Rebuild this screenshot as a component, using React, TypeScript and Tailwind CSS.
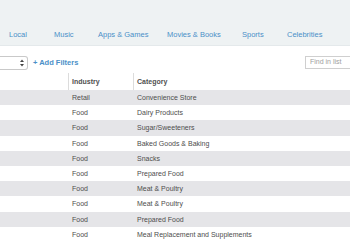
import React from "react";

const nav = [
  { label: "Local", w: "w-[45px]" },
  { label: "Music", w: "w-[44px]" },
  { label: "Apps & Games", w: "w-[69px]" },
  { label: "Movies & Books", w: "w-[75px]" },
  { label: "Sports", w: "w-[45px]" },
  { label: "Celebrities", w: "w-[55px]" },
];

const rows = [
  ["Retail", "Convenience Store"],
  ["Food", "Dairy Products"],
  ["Food", "Sugar/Sweeteners"],
  ["Food", "Baked Goods & Baking"],
  ["Food", "Snacks"],
  ["Food", "Prepared Food"],
  ["Food", "Meat & Poultry"],
  ["Food", "Meat & Poultry"],
  ["Food", "Prepared Food"],
  ["Food", "Meal Replacement and Supplements"],
];

export default function App() {
  return (
    <div className="w-[350px] h-[247px] bg-white overflow-hidden antialiased font-['Liberation_Sans',Arial,sans-serif]">
      <div className="h-[46px] bg-[#eef2f3] border-b border-[#e4e9eb] pt-[30px] pl-[9px] flex text-[7.5px] leading-[10px] text-[#4a90c8]">
        {nav.map((n) => (
          <span key={n.label} className={`${n.w} shrink-0 whitespace-nowrap`}>
            {n.label}
          </span>
        ))}
      </div>
      <div className="h-[27px] pt-[6px] flex items-center">
        <div className="flex items-center w-full h-[14px]">
          <div className="w-[28px] h-[14px] bg-white border border-l-0 border-[#c9c9c9] rounded-r-[3px] flex items-center justify-end pr-[3px]">
            <svg width="4" height="8" viewBox="0 0 4 8">
              <path d="M0 3 L2 0.5 L4 3 Z" fill="#444" />
              <path d="M0 5 L2 7.5 L4 5 Z" fill="#444" />
            </svg>
          </div>
          <span className="ml-[5px] text-[7.5px] font-bold text-[#4a90c8] leading-[10px]">
            + Add Filters
          </span>
          <div className="ml-auto w-[45px] h-[13px] border border-r-0 border-[#cfcfcf] bg-white flex items-center pl-[4px] text-[7px] text-[#a0a0a0] whitespace-nowrap">
            Find in list
          </div>
        </div>
      </div>
      <div className="text-[7px] leading-[9px]">
        <div className="h-[17px] flex items-stretch font-semibold text-[#505050]">
          <div className="w-[68px] shrink-0" />
          <div className="w-[65px] shrink-0 border-l border-[#dcdcdc] pl-[3px] flex items-center">
            Industry
          </div>
          <div className="flex-1 border-l border-[#dcdcdc] pl-[3px] flex items-center">
            Category
          </div>
        </div>
        {rows.map((r, i) => (
          <div
            key={i}
            className={`h-[15.2px] flex items-center text-[#4d4d4d] ${
              i % 2 === 0 ? "bg-[#e5e5e8]" : "bg-white"
            }`}
          >
            <div className="w-[68px] shrink-0" />
            <div className="w-[65px] shrink-0 pl-[4px]">{r[0]}</div>
            <div className="flex-1 pl-[4px] whitespace-nowrap">{r[1]}</div>
          </div>
        ))}
      </div>
    </div>
  );
}
